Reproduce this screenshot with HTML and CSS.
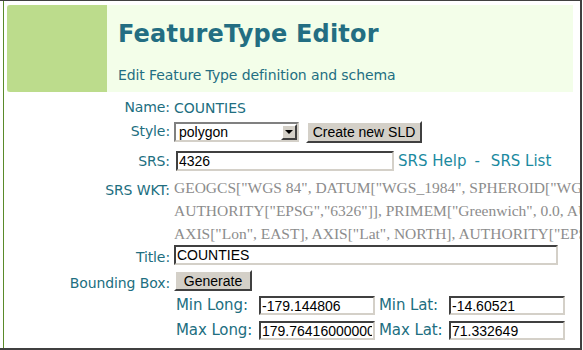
FILE: index.html
```html
<!DOCTYPE html>
<html lang="en">
<head>
    <meta charset="UTF-8">
    <title>FeatureType Editor</title>
    <link rel="stylesheet" href="styles.css">
</head>
<body>
    <div class="page">
        <div class="content">
            <div class="header">
                <div class="header-block"></div>
                <div class="header-text">
                    <h1>FeatureType Editor</h1>
                    <p>Edit Feature Type definition and schema</p>
                </div>
            </div>

            <form class="editor">
                <label class="lbl">Name:</label>
                <div class="val name-val">COUNTIES</div>

                <label class="lbl">Style:</label>
                <div class="val style-row">
                    <span class="select-box">
                        <span class="select-text">polygon</span>
                        <span class="select-arrow"></span>
                    </span>
                    <button type="button" class="btn btn-sld">Create new SLD</button>
                </div>

                <label class="lbl">SRS:</label>
                <div class="val">
                    <input type="text" class="field srs-field" value="4326">
                    <a class="link" href="#">SRS Help</a>
                    <span class="dash">-</span>
                    <a class="link" href="#">SRS List</a>
                </div>

                <label class="lbl lbl-top">SRS WKT:</label>
                <div class="val wkt">GEOGCS["WGS 84", DATUM["WGS_1984", SPHEROID["WGS 84", 6378137.0, 298.257223563,<br>AUTHORITY["EPSG","6326"]], PRIMEM["Greenwich", 0.0, AUTHORITY["EPSG","8901"]], UNIT["degree", 0.017453292519943295],<br>AXIS["Lon", EAST], AXIS["Lat", NORTH], AUTHORITY["EPSG","4326"]]</div>

                <label class="lbl">Title:</label>
                <div class="val">
                    <input type="text" class="field title-field" value="COUNTIES">
                </div>

                <label class="lbl">Bounding Box:</label>
                <div class="val">
                    <button type="button" class="btn btn-gen">Generate</button>
                </div>

                <div></div>
                <div class="bbox">
                    <span class="lbl">Min Long:</span>
                    <input type="text" class="field bb-field" value="-179.144806">
                    <span class="lbl">Min Lat:</span>
                    <input type="text" class="field bb-field" value="-14.60521">
                    <span class="lbl">Max Long:</span>
                    <input type="text" class="field bb-field" value="179.76416000000001">
                    <span class="lbl">Max Lat:</span>
                    <input type="text" class="field bb-field" value="71.332649">
                </div>
            </form>
        </div>
    </div>
</body>
</html>
```

FILE: styles.css
```css
body {
    margin: 0;
    padding: 0;
    background-color: #fff;
    font-family: "DejaVu Sans", Verdana, sans-serif;
}

.page {
    width: 580px;
    height: 347px;
    border-top: 1px solid #404040;
    border-right: 2px solid #404040;
    border-bottom: 2px solid #404040;
    overflow: hidden;
}

.content {
    margin-left: 3px;
    border-left: 1px solid #5a8a2a;
    height: 100%;
    padding-top: 4px;
}

/* Header */
.header {
    display: flex;
    margin-left: 3px;
    margin-right: 7px;
    height: 87px;
    background-color: #f3fee9;
}

.header-block {
    width: 100px;
    background-color: #bcdc8c;
    border-radius: 3px 0 0 3px;
}

.header-text {
    padding-left: 11px;
    color: #236e82;
}

.header-text h1 {
    margin: 14px 0 0 0;
    font-size: 24px;
    line-height: 30px;
    font-weight: bold;
    letter-spacing: 0.2px;
}

.header-text p {
    margin: 17px 0 0 0;
    font-size: 14px;
    line-height: 18px;
    letter-spacing: -0.1px;
}

/* Form */
.editor {
    display: grid;
    grid-template-columns: 166px 1fr;
    column-gap: 4px;
    margin-top: 7px;
    font-size: 14px;
    color: #216e80;
}

.lbl {
    text-align: right;
    line-height: 17px;
    align-self: center;
    letter-spacing: -0.1px;
}

.lbl-top {
    align-self: start;
    margin-top: 7px;
}

.val {
    display: flex;
    align-items: center;
}

.name-val {
    height: 17px;
}

.style-row {
    margin: 5px 0 4px 0;
}

.select-box {
    display: flex;
    align-items: center;
    width: 125px;
    height: 20px;
    box-sizing: border-box;
    border: 2px solid;
    border-color: #808080 #d4d0c8 #d4d0c8 #808080;
    background-color: #fff;
    font-family: "Liberation Sans", Arial, sans-serif;
    font-size: 14px;
    color: #000;
}

.select-text {
    flex: 1;
    padding-left: 3px;
}

.select-arrow {
    position: relative;
    width: 16px;
    height: 16px;
    background-color: #d4d0c8;
    border: 2px solid;
    border-color: #fff #404040 #404040 #fff;
    box-sizing: border-box;
}

.select-arrow::after {
    content: "";
    position: absolute;
    left: 2px;
    top: 4px;
    border-left: 4px solid transparent;
    border-right: 4px solid transparent;
    border-top: 4px solid #000;
}

.btn {
    font-family: "Liberation Sans", Arial, sans-serif;
    font-size: 14px;
    color: #000;
    background-color: #d4d0c8;
    border: 2px solid;
    border-color: #fff #404040 #404040 #fff;
    padding: 0;
    box-sizing: border-box;
}

.btn-sld {
    width: 116px;
    height: 22px;
    margin-left: 7px;
}

.btn-gen {
    width: 78px;
    height: 21px;
    margin: 0 0 5px 0;
}

.field {
    font-family: "Liberation Sans", Arial, sans-serif;
    font-size: 14px;
    color: #000;
    border: 2px solid;
    border-color: #404040 #d4d0c8 #d4d0c8 #404040;
    padding: 0 1px;
    height: 20px;
    box-sizing: border-box;
    background-color: #fff;
}

.srs-field {
    width: 218px;
    margin: 4px 0 4px 2px;
}

.link {
    color: #1b8aa0;
    text-decoration: none;
    font-size: 15px;
    margin-left: 4px;
}

.dash {
    color: #1b8aa0;
    font-size: 15px;
    margin: 0 7px 0 8px;
}

.wkt {
    display: block;
    margin-top: 1px;
    white-space: nowrap;
    overflow: hidden;
    font-family: "Liberation Serif", "Times New Roman", serif;
    font-size: 15.5px;
    line-height: 23px;
    color: #8c8c8c;
}

.title-field {
    width: 384px;
    margin: 0 0 5px 0;
}

.bbox {
    display: grid;
    grid-template-columns: 83px 116px 74px 116px;
    row-gap: 6px;
    align-items: center;
    padding-left: 2px;
}

.bbox .lbl {
    text-align: left;
    font-size: 15px;
}

.bbox .lbl:nth-child(3),
.bbox .lbl:nth-child(7) {
    padding-left: 4px;
}

.bb-field {
    width: 116px;
    height: 19px;
}
```
